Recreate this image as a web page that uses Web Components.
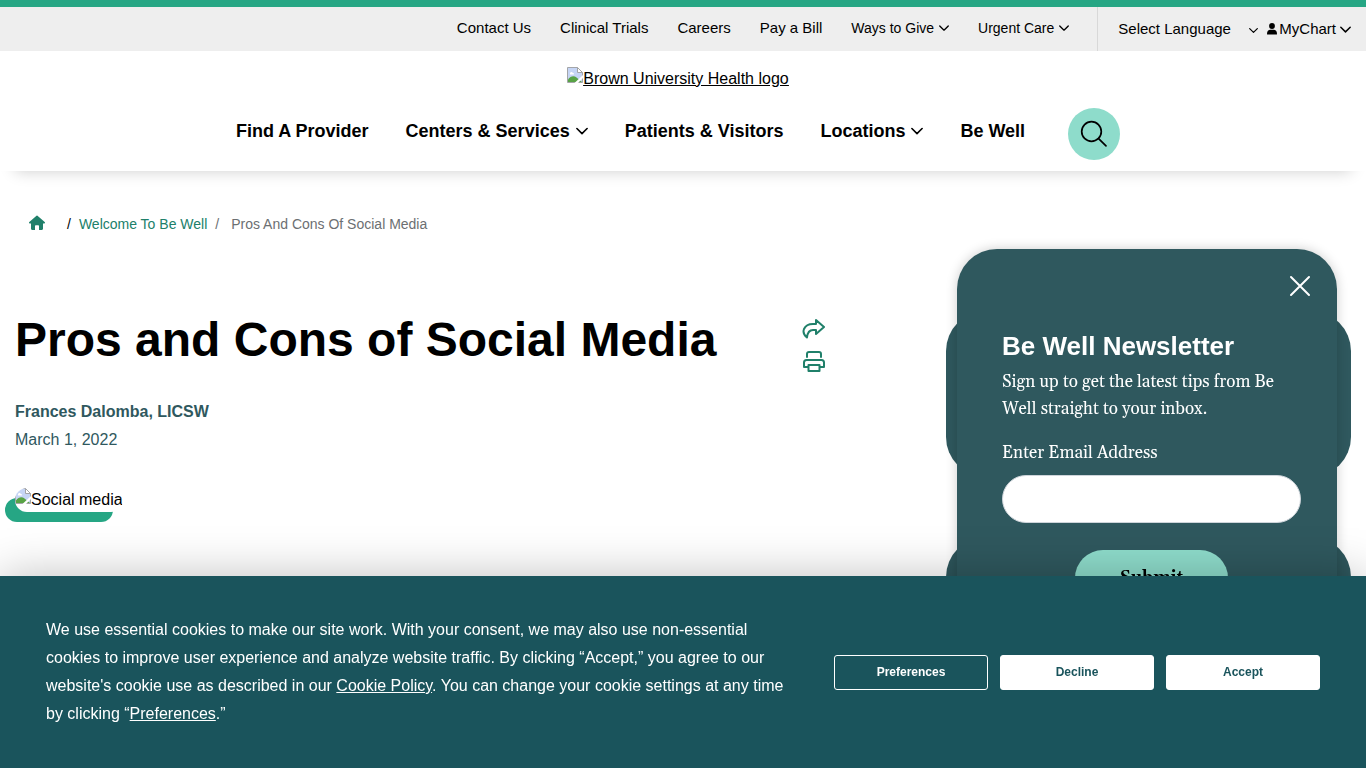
<!DOCTYPE html>
<html lang="en">
<head>
<meta charset="utf-8">
<meta name="viewport" content="width=device-width, initial-scale=1">
<title>Pros and Cons of Social Media</title>
<style>
  body {
    margin: 0;
    background: #fff;
    color: #000;
    font: 16px/24px "Liberation Sans", Arial, sans-serif;
  }
  main {
    display: grid;
    grid-template-columns: 1fr 405px;
    column-gap: 120px;
    padding: 75px 15px 0;
  }
  aside {
    display: grid;
    row-gap: 60px;
    align-content: start;
  }
</style>
</head>
<body>
<top-bar>
  <nav-item>Contact Us</nav-item>
  <nav-item>Clinical Trials</nav-item>
  <nav-item>Careers</nav-item>
  <nav-item>Pay a Bill</nav-item>
  <nav-item class="small" menu>Ways to Give</nav-item>
  <nav-item class="small" menu>Urgent Care</nav-item>
</top-bar>
<site-header>
  <nav-item>Find A Provider</nav-item>
  <nav-item menu>Centers &amp; Services</nav-item>
  <nav-item>Patients &amp; Visitors</nav-item>
  <nav-item menu>Locations</nav-item>
  <nav-item>Be Well</nav-item>
</site-header>
<bread-crumb>
  <span slot="parent">Welcome To Be Well</span>
  <span slot="current">Pros And Cons Of Social Media</span>
</bread-crumb>
<main>
  <article-intro>
    <span slot="title">Pros and Cons of Social Media</span>
    <span slot="author">Frances Dalomba, LICSW</span>
    <span slot="date">March 1, 2022</span>
    <missing-image slot="media">Social media</missing-image>
  </article-intro>
  <aside>
    <side-card></side-card>
    <side-card></side-card>
  </aside>
</main>
<newsletter-popup>
  <span slot="title">Be Well Newsletter</span>
  Sign up to get the latest tips from Be Well straight to your inbox.
</newsletter-popup>
<cookie-bar></cookie-bar>

<script>
// every element clones its template into an open shadow root
class BaseElement extends HTMLElement {
  constructor() {
    super();
    const template = document.createElement('template');
    template.innerHTML = this.constructor.html;
    this.attachShadow({ mode: 'open' });
    this.shadowRoot.appendChild(template.content.cloneNode(true));
  }
}

class ChevronIcon extends BaseElement {
  static html = `
    <style>
      :host { display: inline-flex; flex: none; }
      svg { width: var(--chevron, 10px); height: var(--chevron, 10px); }
    </style>
    <svg viewBox="0 0 12 12" fill="none" stroke="currentColor" stroke-width="1.6" stroke-linecap="round" stroke-linejoin="round" aria-hidden="true">
      <path d="M.9 3.5 6 8.6l5.1-5.1"/>
    </svg>
  `;
}
customElements.define('chevron-icon', ChevronIcon);

class NavItem extends BaseElement {
  static html = `
    <style>
      :host { display: block; white-space: nowrap; }
      a {
        display: flex;
        align-items: center;
        gap: var(--nav-gap, 5px);
        color: inherit;
        text-decoration: none;
      }
      chevron-icon { display: none; }
      :host([menu]) chevron-icon { display: inline-flex; }
    </style>
    <a href="#"><span><slot></slot></span><chevron-icon></chevron-icon></a>
  `;
}
customElements.define('nav-item', NavItem);

class MissingImage extends BaseElement {
  static html = `
    <style>
      :host { display: inline-flex; align-items: flex-start; }
      svg { width: 16px; height: 16px; flex: none; }
    </style>
    <svg viewBox="0 0 16 16" aria-hidden="true">
      <path d="M.5.5h10l5 5v10H.5z" fill="#c6d5f5" stroke="#a3a5a8"/>
      <path d="M3 6.5c0-1.6 2.4-2 2.8-.6 1.4-.2 1.7 1.6.4 1.7H3.6C3 7.6 2.7 7 3 6.5z" fill="#fff"/>
      <path d="M1 15v-2.5C3.5 9 7 8.5 9.5 10.5L15 15z" fill="#58a345"/>
      <path d="M10.5.5v5h5z" fill="#fff" stroke="#a3a5a8"/>
      <path d="M7.5 16 16 8v3l-5 5z" fill="#fff"/>
    </svg>
    <span><slot></slot></span>
  `;
}
customElements.define('missing-image', MissingImage);

class TopBar extends BaseElement {
  static html = `
    <style>
      :host {
        display: flex;
        justify-content: flex-end;
        border-top: 7px solid #26a684;
        background: #eee;
        height: 44px;
        padding-right: 15px;
        font-size: 15px;
      }
      nav {
        display: flex;
        align-items: center;
        gap: 29px;
        padding: 0 28px 2px 0;
      }
      ::slotted(.small) { font-size: 14px; }
      .tools {
        display: flex;
        align-items: center;
        border-left: 1px solid #d8d8d8;
        padding-left: 20px;
      }
      .language {
        display: grid;
        grid-template-columns: 140px;
        align-items: center;
      }
      select, .language chevron-icon { grid-area: 1 / 1; }
      .language chevron-icon { --chevron: 9px; justify-self: end; pointer-events: none; padding-top: 3px; }
      select {
        appearance: none;
        border: 0;
        padding: 0;
        background: none;
        color: #000;
        font: inherit;
      }
      button {
        display: flex;
        align-items: center;
        border: 0;
        padding: 0 0 0 9px;
        background: none;
        color: #000;
        font: inherit;
      }
      .user { width: 10px; height: 12px; margin-right: 2px; }
      button chevron-icon { margin-left: 4px; --chevron: 11px; }
    </style>
    <nav aria-label="Utility"><slot></slot></nav>
    <div class="tools">
      <div class="language">
        <select aria-label="Select Language"><option>Select Language</option></select>
        <chevron-icon></chevron-icon>
      </div>
      <button type="button">
        <svg class="user" viewBox="0 0 10 12" aria-hidden="true">
          <circle cx="5" cy="3" r="2.9"/>
          <path d="M0 11c0-3 1.5-4.300 3.200-4.300h3.600C8.500 6.700 10 8 10 11c0 .3-.2.6-.6.6H.6C.2 11.600 0 11.300 0 11z"/>
        </svg>
        MyChart
        <chevron-icon></chevron-icon>
      </button>
    </div>
  `;
}
customElements.define('top-bar', TopBar);

class SiteHeader extends BaseElement {
  static html = `
    <style>
      :host {
        display: block;
        padding: 16px 10px 11px 0;
        box-shadow: 0 15px 15px -15px rgba(0, 0, 0, .2);
      }
      .logo {
        display: flex;
        width: max-content;
        margin: 0 auto;
        color: #000;
      }
      .logo missing-image { text-decoration: underline; }
      nav {
        display: flex;
        justify-content: center;
        align-items: center;
        gap: 37px;
        margin-top: 17px;
        font-size: 18px;
        font-weight: bold;
        --nav-gap: 6px;
        --chevron: 12px;
      }
      ::slotted(nav-item) { padding-bottom: 6px; }
      button {
        display: grid;
        place-items: center;
        width: 52px;
        height: 52px;
        margin-left: 6px;
        border: 0;
        border-radius: 50%;
        padding: 0;
        background: #8edccb;
      }
      button svg { width: 28px; height: 28px; }
    </style>
    <a class="logo" href="#"><missing-image>Brown University Health logo</missing-image></a>
    <nav aria-label="Main">
      <slot></slot>
      <button type="button" aria-label="Search">
        <svg viewBox="0 0 28 28" fill="none" stroke="#000" stroke-width="1.7" stroke-linecap="round">
          <circle cx="11.5" cy="11.5" r="9.8"/><path d="m18.600 18.600 7.400 7.200"/>
        </svg>
      </button>
    </nav>
  `;
}
customElements.define('site-header', SiteHeader);

class BreadCrumb extends BaseElement {
  static html = `
    <style>
      :host { display: block; padding: 41px 29px 0; font-size: 14px; }
      ol {
        display: flex;
        align-items: center;
        margin: 0;
        padding: 0;
        list-style: none;
      }
      a { color: #20806a; text-decoration: none; }
      .home { display: flex; width: 16px; margin-right: 22px; padding-bottom: 3px; }
      li { display: flex; gap: 8px; }
      li + li::before { content: "/"; }
      li.current { gap: 12px; margin-left: 8px; color: #6c6f72; }
    </style>
    <nav aria-label="Breadcrumb">
      <ol>
        <li><a class="home" href="#" aria-label="Home">
          <svg viewBox="0 0 16 16" fill="#20806a"><path d="M7.500.8a.8.8 0 0 1 1 0l7.200 6.300c.6.600.2 1.300-.4 1.300H14v5.400c0 .7-.5 1.200-1.200 1.200H10v-3.800c0-.6-.4-1-1-1H7c-.6 0-1 .4-1 1V15H3.200C2.500 15 2 14.500 2 13.800V8.400H.7C.1 8.400-.3 7.700.3 7.100z"/></svg>
        </a></li>
        <li><a href="#"><slot name="parent"></slot></a></li>
        <li class="current"><slot name="current"></slot></li>
      </ol>
    </nav>
  `;
}
customElements.define('bread-crumb', BreadCrumb);

class ArticleIntro extends BaseElement {
  static html = `
    <style>
      :host { display: block; color: #2f585e; }
      header { display: flex; justify-content: space-between; }
      h1 { margin: 0; color: #000; font-size: 48px; line-height: 58px; }
      .actions {
        display: flex;
        flex-direction: column;
        gap: 9px;
        padding-top: 6px;
      }
      button { width: 24px; height: 24px; border: 0; padding: 0; background: none; }
      p { margin: 0; line-height: 28px; }
      .author { margin-top: 24px; font-weight: bold; }
      figure {
        display: flex;
        width: max-content;
        margin: 34px 0 0;
        color: #000;
        position: relative;
      }
      ::slotted(missing-image) {
        overflow: hidden;
        border-radius: 12px;
        background: #fff;
      }
      /* pill that peeks out below the picture */
      figure::before {
        content: "";
        position: absolute;
        z-index: -1;
        inset: 10px 10px -10px -10px;
        border-radius: 12px;
        background: #26a684;
      }
    </style>
    <header>
      <h1><slot name="title"></slot></h1>
      <div class="actions">
        <button type="button" aria-label="Share">
          <svg viewBox="0 0 24 24" fill="none" stroke="#20806a" stroke-width="2" stroke-linejoin="round"><path d="M14 3l8 7-8 7v-4h-3c-4 0-5.500 2.500-6 7.500C2 18 1 14.500 2 12 3.500 8.500 7 7 11 7h3z"/></svg>
        </button>
        <button type="button" aria-label="Print">
          <svg viewBox="0 0 24 24" fill="none" stroke="#20806a" stroke-width="2" stroke-linejoin="round" stroke-linecap="round"><path d="M5 7V4c0-1.300.700-2 2-2h10c1.300 0 2 .7 2 2v3M5.500 17H2v-4.500C2 11 3 10 4.500 10h15c1.500 0 2.500 1 2.500 2.500V17h-3.500M6.500 15h11v6h-11z"/></svg>
        </button>
      </div>
    </header>
    <p class="author"><slot name="author"></slot></p>
    <p><slot name="date"></slot></p>
    <figure><slot name="media"></slot></figure>
  `;
}
customElements.define('article-intro', ArticleIntro);

class SideCard extends BaseElement {
  static html = `
    <style>
      :host {
        display: block;
        min-height: 166px;
        border-radius: 40px;
        background: #2f585e;
      }
    </style>
    <slot></slot>
  `;
}
customElements.define('side-card', SideCard);

class NewsletterPopup extends BaseElement {
  static html = `
    <style>
      :host {
        display: block;
        box-sizing: border-box;
        position: fixed;
        top: 249px;
        right: 29px;
        width: 380px;
        padding: 25px 25px 45px 45px;
        border-radius: 40px;
        background: #2f585e;
        box-shadow: 0 0 12px rgba(0, 0, 0, .2);
        color: #fff;
        font: 17px/27px Georgia, Gelasio, "Liberation Serif", serif;
      }
      .close {
        display: block;
        width: 24px;
        height: 24px;
        margin-left: auto;
        border: 0;
        padding: 0;
        background: none;
      }
      form { padding-right: 11px; }
      h2 {
        margin: 32px 0 7px;
        font: bold 26px/32px "Liberation Sans", Arial, sans-serif;
      }
      p { margin: 0 0 17px; }
      label { display: block; }
      input {
        display: block;
        box-sizing: border-box;
        width: 100%;
        height: 48px;
        margin: 8px 0 27px;
        border: 1px solid #ced4da;
        border-radius: 24px;
        padding: 0 20px;
        background: #fff;
        font: inherit;
      }
      .submit {
        display: block;
        width: 153px;
        height: 56px;
        margin: 0 auto;
        border: 0;
        border-radius: 28px;
        background: #8edccb;
        color: #000;
        font: inherit;
        font-weight: bold;
      }
    </style>
    <button class="close" type="button" aria-label="Close">
      <svg viewBox="0 0 24 24" fill="none" stroke="#fff" stroke-width="2" stroke-linecap="round"><path d="m3 3 18 18M21 3 3 21"/></svg>
    </button>
    <form>
      <h2><slot name="title"></slot></h2>
      <p><slot></slot></p>
      <label for="email">Enter Email Address</label>
      <input id="email" type="email">
      <button class="submit" type="button">Submit</button>
    </form>
  `;
}
customElements.define('newsletter-popup', NewsletterPopup);

class CookieBar extends BaseElement {
  static html = `
    <style>
      :host {
        display: flex;
        align-items: center;
        gap: 46px;
        box-sizing: border-box;
        position: fixed;
        right: 0;
        bottom: 0;
        left: 0;
        padding: 40px 46px;
        background: #1a545c;
        box-shadow: 0 0 44px rgba(0, 0, 0, .25);
        color: #fff;
      }
      p { flex: 1; margin: 0; line-height: 28px; }
      a { color: inherit; }
      .buttons { display: flex; gap: 12px; }
      button {
        width: 154px;
        height: 35px;
        border: 1px solid #fff;
        border-radius: 3px;
        padding: 0;
        background: #fff;
        color: #1a545c;
        font: bold 12px/16px "Liberation Sans", Arial, sans-serif;
      }
      .outline { background: none; color: #fff; }
    </style>
    <p>We use essential cookies to make our site work. With your consent, we may also use non-essential cookies to improve user experience and analyze website traffic. By clicking “Accept,” you agree to our website's cookie use as described in our <a href="#">Cookie Policy</a>. You can change your cookie settings at any time by clicking “<a href="#">Preferences</a>.”</p>
    <div class="buttons">
      <button class="outline" type="button">Preferences</button>
      <button type="button">Decline</button>
      <button type="button">Accept</button>
    </div>
  `;
}
customElements.define('cookie-bar', CookieBar);
</script>
</body>
</html>
